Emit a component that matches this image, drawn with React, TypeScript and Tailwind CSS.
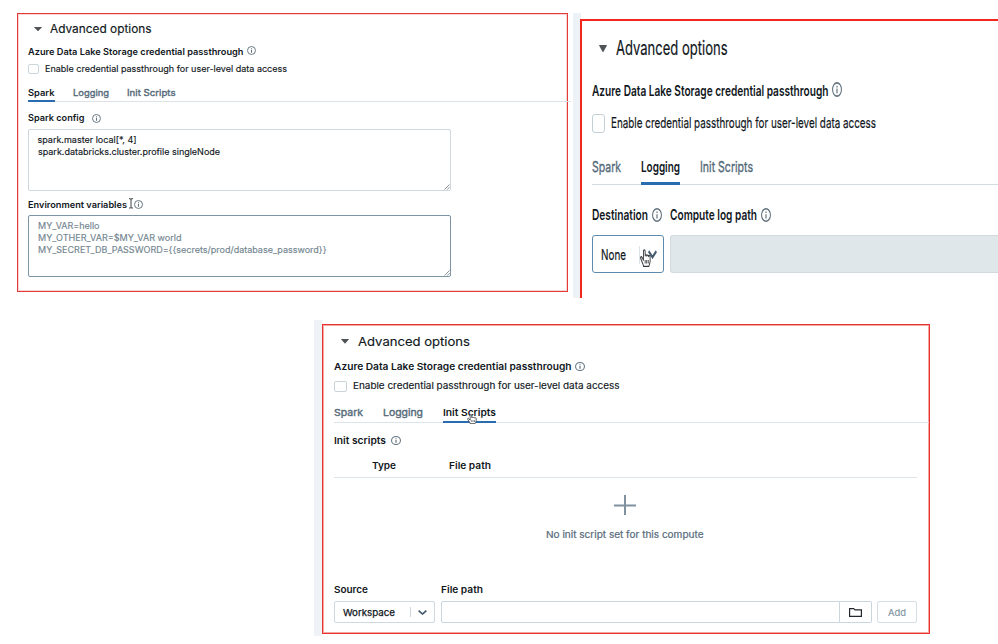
import { useLayoutEffect, useRef } from "react";
import type { ReactNode } from "react";

/** Text stretched or condensed horizontally to an exact width. */
function Fit({ w, className = "", children }: { w: number; className?: string; children: ReactNode }) {
  const ref = useRef<HTMLSpanElement>(null);
  useLayoutEffect(() => {
    const el = ref.current;
    if (el) el.style.transform = `scaleX(${w / el.getBoundingClientRect().width})`;
    return () => {
      if (el) el.style.transform = "";
    };
  }, [w]);
  return (
    <span className={`flex shrink-0 whitespace-nowrap ${className}`} style={{ width: w }}>
      <span ref={ref} className="block shrink-0 origin-left">
        {children}
      </span>
    </span>
  );
}

function Info({ className }: { className: string }) {
  return (
    <svg viewBox="0 0 16 16" preserveAspectRatio="none" className={`shrink-0 text-[#62727e] ${className}`} fill="none" stroke="currentColor">
      <circle cx="8" cy="8" r="7.100" strokeWidth="1.700" />
      <path d="M8 7v5" strokeWidth="1.900" />
      <path d="M8 4v1.800" strokeWidth="1.900" />
    </svg>
  );
}

function Caret({ className }: { className: string }) {
  return (
    <svg viewBox="0 0 10 6" preserveAspectRatio="none" className={`shrink-0 ${className}`}>
      <path d="M0.6 0h8.8q.8 0 .3.7L5.6 5.7q-.6.6-1.2 0L.3.7Q-.2 0 .6 0z" fill="#505457" />
    </svg>
  );
}

function Chevron({ className }: { className: string }) {
  return (
    <svg viewBox="0 0 10 6" preserveAspectRatio="none" className={`shrink-0 ${className}`} fill="none" stroke="#43586a">
      <path d="M.7 .8L5 4.8L9.3 .8" strokeWidth="1.900" />
    </svg>
  );
}

function Grip() {
  return (
    <svg viewBox="0 0 6 6" className="absolute right-0 bottom-0 size-[6px]" fill="none" stroke="#6b7479" strokeWidth=".8">
      <path d="M.5 5.5l5-5M3.2 5.5l2.3-2.3" />
    </svg>
  );
}

function Hand({ className }: { className: string }) {
  return (
    <svg viewBox="0 0 16 18" preserveAspectRatio="none" className={`absolute ${className}`} fill="#fff" stroke="#33383c" strokeWidth="1.3" strokeLinejoin="round">
      <path d="M5 11.2L3.2 8.6C2 7 .4 8 1 9.4l3 5.2c.4.9 1 1.3 1 2.7h8c0-1.500 1.700-2.500 1.700-5V7.800c0-1.500-2-1.500-2.200-.3 0-1.600-2.400-1.800-2.500-.5 0-1.500-2.400-1.600-2.500-.2V2.200C7.500.3 5 .3 5 2.200z" />
      <path d="M7.500 11v3.500M9.700 11v3.500M12 11v3.500" strokeWidth="1" />
    </svg>
  );
}

function Tab({ w, active, bar, text }: { w: number; active?: boolean; bar: string; text: string }) {
  return (
    <div className={`${bar} ${active ? "border-[#2a6cb0] font-semibold text-[#11171c]" : "border-transparent text-[#566b7a] [-webkit-text-stroke:0.35px]"}`}>
      <Fit w={w}>{text}</Fit>
    </div>
  );
}

function SparkPanel() {
  return (
    <section className="mt-[13px] ml-[17px] flex h-[279px] w-[551px] shrink-0 flex-col border border-[#e23a36] pl-[10px] text-[9px] shadow-[inset_0_0_0_1px_#fbd5d3]">
      <div className="mt-[9px] flex h-[13px] items-center pl-[6px] text-[11.200px] leading-[13px]">
        <Caret className="mr-2 mb-px h-1 w-2" />
        <Fit w={101.500} className="[-webkit-text-stroke:0.15px]">Advanced options</Fit>
      </div>
      <div className="mt-[10px] flex h-[11px] items-center leading-[11px] font-semibold">
        <Fit w={215.500}>Azure Data Lake Storage credential passthrough</Fit>
        <Info className="mb-[2px] ml-[3.500px] h-[9px] w-[9px]" />
      </div>
      <div className="mt-[6px] flex h-[11px] items-center leading-[11px]">
        <span className="mr-[6px] h-[10px] w-[11px] shrink-0 rounded-[2px] border border-[#cbd5dc]" />
        <Fit w={242} className="[-webkit-text-stroke:0.15px]">Enable credential passthrough for user-level data access</Fit>
      </div>
      <div className="mt-3 -mr-[4px] flex h-4 shrink-0 gap-[18px] leading-[13px] shadow-[inset_0_-1px_0_#dbe3e7]">
        <Tab w={26.500} active bar="h-4 border-b-2" text="Spark" />
        <Tab w={36} bar="h-4 border-b-2" text="Logging" />
        <Tab w={48.500} bar="h-4 border-b-2" text="Init Scripts" />
      </div>
      <div className="mt-[10px] flex h-3 items-center leading-3 font-semibold">
        <Fit w={56.500}>Spark config</Fit>
        <Info className="ml-[7px] h-[9px] w-[9px]" />
      </div>
      <div className="relative mt-[5px] h-[62px] w-[423px] rounded-[2px] border border-[#cfd8dd] pt-[3.500px] pl-[8.500px] leading-[12.400px] [-webkit-text-stroke:0.15px]">
        <Fit w={99}>spark.master local[*, 4]</Fit>
        <Fit w={182}>spark.databricks.cluster.profile singleNode</Fit>
        <Grip />
      </div>
      <div className="relative mt-2 flex h-3 items-center leading-3 font-semibold">
        <Fit w={99}>Environment variables</Fit>
        <Info className="mb-px ml-[6.500px] h-[9px] w-[9px]" />
        <svg viewBox="0 0 6 11" className="absolute top-[-1px] left-[100px] h-[11px] w-[6px]" fill="none" stroke="#3c4246" strokeWidth="1">
          <path d="M1 .7h1.300q.7 0 .7.600 0-.600.700-.600H5M3 1v8.500M1 10h1.300q.7 0 .7-.6 0 .6.7.6H5" />
        </svg>
      </div>
      <div className="relative mt-1 h-[62px] w-[423px] rounded-[2px] border border-[#7d94a3] pt-[3.500px] pl-[8.500px] leading-[12.400px] text-[#738690] [-webkit-text-stroke:0.15px]">
        <Fit w={61.500}>MY_VAR=hello</Fit>
        <Fit w={143.500}>MY_OTHER_VAR=$MY_VAR world</Fit>
        <Fit w={288.500}>{"MY_SECRET_DB_PASSWORD={{secrets/prod/database_password}}"}</Fit>
        <Grip />
      </div>
    </section>
  );
}

function LoggingPanel() {
  return (
    <div className="mt-[13px] ml-[5px] flex h-[285px] w-[425px] shrink-0 bg-[linear-gradient(to_right,#ecf2f5_8px,#fff_8px)] pl-[7px]">
      <section className="mt-[6px] flex w-[418px] flex-col border-t-2 border-l-2 border-[#f3261d] bg-white pl-[10px] text-[14.700px]">
        <div className="mt-[15px] flex h-6 items-center pl-[7px] text-[20px] leading-6">
          <Caret className="mr-[9px] h-[7px] w-2" />
          <Fit w={111.500} className="[-webkit-text-stroke:0.2px]">Advanced options</Fit>
        </div>
        <div className="mt-[21px] flex h-5 items-center leading-5 font-semibold">
          <Fit w={236.500}>Azure Data Lake Storage credential passthrough</Fit>
          <Info className="mb-[3px] ml-[3.500px] h-[15px] w-[10px]" />
        </div>
        <div className="mt-3 flex h-5 items-center leading-5">
          <span className="mr-[6px] h-[19px] w-[13px] shrink-0 rounded-[3px] border border-[#c3d0d8]" />
          <Fit w={265} className="[-webkit-text-stroke:0.2px]">Enable credential passthrough for user-level data access</Fit>
        </div>
        <div className="mt-6 flex h-7 shrink-0 gap-5 leading-5 shadow-[inset_0_-1px_0_#d3dce0]">
          <Tab w={29} bar="h-7 border-b-[3px]" text="Spark" />
          <Tab w={39} active bar="h-7 border-b-[3px]" text="Logging" />
          <Tab w={53} bar="h-7 border-b-[3px]" text="Init Scripts" />
        </div>
        <div className="mt-5 flex h-5 items-center leading-5 font-semibold">
          <Fit w={56}>Destination</Fit>
          <Info className="mr-[8px] ml-[4px] h-[14px] w-[10px]" />
          <Fit w={87}>Compute log path</Fit>
          <Info className="ml-[4px] h-[14px] w-[10px]" />
        </div>
        <div className="mt-[10px] flex h-[38px] gap-[6.500px]">
          <div className="relative flex w-[71.500px] shrink-0 items-center rounded-[3px] border border-[#5e8bad] pt-px pl-[7.500px] leading-5">
            <Fit w={25} className="[-webkit-text-stroke:0.2px]">None</Fit>
            <span className="ml-[13px] h-[18px] w-px bg-[#dbe3e7]" />
            <Chevron className="ml-[8px] h-[9px] w-[9px]" />
            <Hand className="top-[13px] left-[47px] h-[18px] w-[11px]" />
          </div>
          <div className="flex-1 rounded-l-[3px] border border-r-0 border-[#d2dade] bg-[#e0e7ea]" />
        </div>
      </section>
    </div>
  );
}

function InitScriptsPanel() {
  return (
    <div className="mt-[22px] ml-[314px] flex h-[316px] w-[617px] shrink-0">
      <div className="w-2 shrink-0 bg-[#eff3f7]" />
      <section className="mt-1 flex h-[310px] w-[608px] flex-col border border-[#e63530] pl-[11px] text-[9.300px] shadow-[inset_0_0_0_1px_#f6a5a2]">
        <div className="mt-[9px] flex h-[15px] items-center pl-[7px] text-[12.300px] leading-[15px]">
          <Caret className="mr-[8.500px] h-[4.500px] w-2" />
          <Fit w={112} className="[-webkit-text-stroke:0.15px]">Advanced options</Fit>
        </div>
        <div className="mt-3 flex h-3 items-center leading-3 font-semibold">
          <Fit w={237.500}>Azure Data Lake Storage credential passthrough</Fit>
          <Info className="mb-[2px] ml-[3.500px] h-[9px] w-[10px]" />
        </div>
        <div className="mt-[7px] flex h-3 items-center leading-3">
          <span className="mr-[6px] h-[11px] w-[13px] shrink-0 rounded-[2px] border border-[#c8d3da]" />
          <Fit w={266.500} className="[-webkit-text-stroke:0.15px]">Enable credential passthrough for user-level data access</Fit>
        </div>
        <div className="relative mt-[13px] flex h-[18px] shrink-0 gap-5 leading-[15px] shadow-[inset_0_-1px_0_#dbe4e8]">
          <Tab w={29} bar="h-[18px] border-b-2" text="Spark" />
          <Tab w={40} bar="h-[18px] border-b-2" text="Logging" />
          <Tab w={53} active bar="h-[18px] border-b-2" text="Init Scripts" />
          <Hand className="top-[9px] left-[133px] h-[10px] w-[10px]" />
        </div>
        <div className="mt-3 flex h-3 items-center leading-3 font-semibold">
          <Fit w={52}>Init scripts</Fit>
          <Info className="mb-px ml-[5px] h-[9px] w-[10px]" />
        </div>
        <div className="mt-3 mr-3 flex h-[19px] shrink-0 border-b border-[#dde5e9] pl-[37.500px] leading-[13px] font-semibold">
          <Fit w={24} className="mr-[53.500px]">Type</Fit>
          <Fit w={42}>File path</Fit>
        </div>
        <div className="mr-[13px] flex flex-col items-center">
          <svg viewBox="0 0 22 20" className="mt-[17px] h-5 w-[22px]" stroke="#8092a0" strokeWidth="2">
            <path d="M0 10.500h22M11 0v20" />
          </svg>
          <Fit w={157.500} className="mt-[14px] h-3 leading-3 text-[#566b7a] [-webkit-text-stroke:0.2px]">No init script set for this compute</Fit>
        </div>
        <div className="mt-[43px] flex h-3 leading-3 font-semibold">
          <Fit w={34} className="mr-[73px]">Source</Fit>
          <Fit w={42}>File path</Fit>
        </div>
        <div className="mt-[5px] mr-3 flex h-[22px] shrink-0 leading-3">
          <div className="mr-[6px] flex w-[101px] shrink-0 items-center rounded-[2px] border border-[#ced9df] pl-2">
            <Fit w={52} className="pt-px [-webkit-text-stroke:0.25px]">Workspace</Fit>
            <span className="ml-[15px] h-[10px] w-px bg-[#ccd7dd]" />
            <Chevron className="ml-[7px] h-[5px] w-[9px]" />
          </div>
          <div className="flex-1 rounded-l-[2px] border border-[#c9d6de]" />
          <div className="mr-[5px] flex w-[32px] shrink-0 items-center justify-center rounded-r-[2px] border border-l-0 border-[#c9d6de]">
            <svg viewBox="0 0 13 9" className="h-[9px] w-[13px]" fill="none" stroke="#22282d" strokeWidth="1.200">
              <path d="M.6.600h4l1.500 1.300h6.300v6.500H.6z" />
            </svg>
          </div>
          <div className="flex w-[40px] shrink-0 items-center justify-center rounded-[2px] border border-[#d5dee3] text-[#8396a3]">
            <Fit w={18} className="pt-px [-webkit-text-stroke:0.2px]">Add</Fit>
          </div>
        </div>
      </section>
    </div>
  );
}

export default function App() {
  return (
    <main className="flex h-[644px] w-[998px] flex-col overflow-hidden bg-white font-['Inter','Liberation_Sans',sans-serif] text-[#11171c]">
      <div className="flex h-[298px] shrink-0">
        <SparkPanel />
        <LoggingPanel />
      </div>
      <InitScriptsPanel />
    </main>
  );
}
